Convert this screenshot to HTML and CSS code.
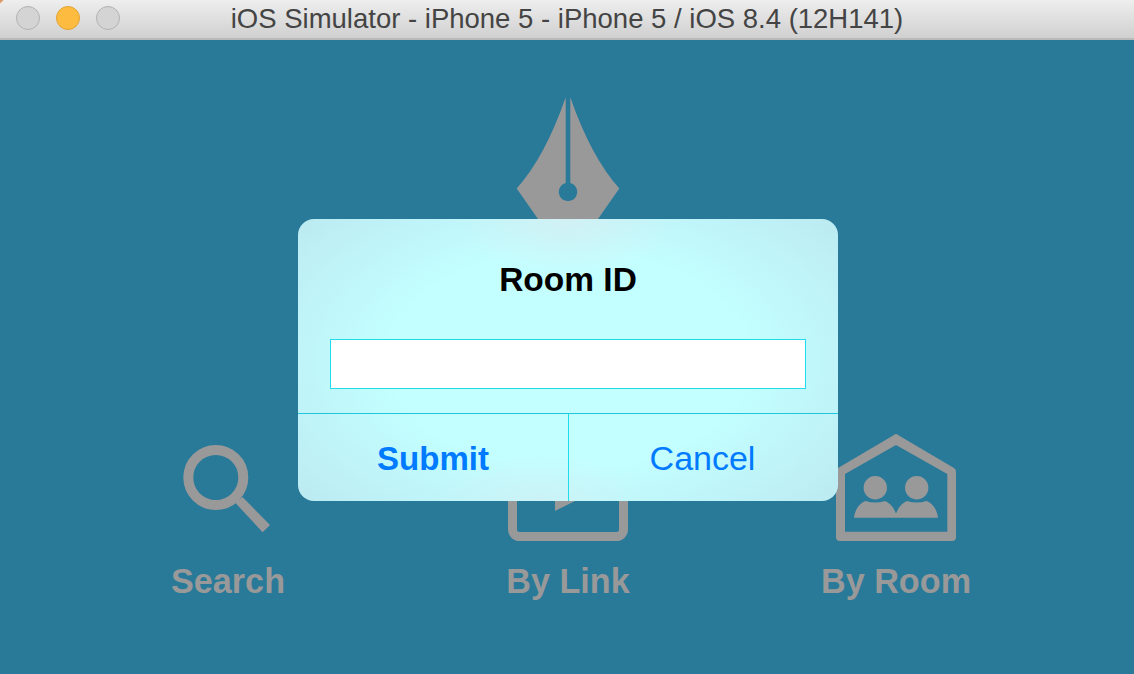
FILE: index.html
```html
<!DOCTYPE html>
<html lang="en">
<head>
    <meta charset="UTF-8">
    <title>iOS Simulator - iPhone 5 - iPhone 5 / iOS 8.4 (12H141)</title>
    <link rel="stylesheet" href="styles.css">
</head>
<body>
    <div class="titlebar">
        <div class="lights">
            <span class="light"></span>
            <span class="light yellow"></span>
            <span class="light"></span>
        </div>
        <div class="window-title">iOS Simulator - iPhone 5 - iPhone 5 / iOS 8.4 (12H141)</div>
    </div>

    <div class="screen">
        <!-- Pen nib logo -->
        <svg class="logo" width="106" height="140" viewBox="-2 0 106 140">
            <path fill="#999" fill-rule="evenodd" d="M49.7 0.3 Q29 60 0.7 91.5 L22 122 L28 132 L76 132 L82 122 L103.3 91.5 Q75 60 54.3 0.3 L54.3 86 A9.2 9.2 0 1 1 49.7 86 Z"/>
        </svg>

        <div class="menu">
            <div class="menu-item">
                <svg class="menu-icon" width="120" height="107" viewBox="0 0 120 107">
                    <circle cx="47.8" cy="43.5" r="27.5" fill="none" stroke="#999" stroke-width="10"/>
                    <path fill="#999" d="M67 68.5 L74.5 63 L102 91 L94.7 98.3 Z"/>
                </svg>
                <div class="menu-label">Search</div>
            </div>
            <div class="menu-item">
                <svg class="menu-icon" width="120" height="107" viewBox="0 0 120 107">
                    <rect x="4.5" y="10" width="111" height="92.5" rx="7" fill="none" stroke="#999" stroke-width="9"/>
                    <path fill="#999" d="M47 37 L87 57 L47 77 Z"/>
                </svg>
                <div class="menu-label">By Link</div>
            </div>
            <div class="menu-item">
                <svg class="menu-icon" width="120" height="107" viewBox="0 0 120 107">
                    <path fill="#999" fill-rule="evenodd" d="M60 0 Q61 0 62 1 L118 34 Q120 35 120 38 L120 103 Q120 107 116 107 L4 107 Q0 107 0 103 L0 38 Q0 35 2 34 L58 1 Q59 0 60 0 Z M60 11 L9 40 L9 97.7 L111.3 97.7 L111.3 40 Z"/>
                    <circle cx="39.3" cy="53.7" r="11.7" fill="#999"/>
                    <circle cx="80.7" cy="53.7" r="11.7" fill="#999"/>
                    <path fill="#999" d="M18 83.7 C19 75 24 69 29.5 67 Q39.3 70 49 67 C54 69 58 74 60 79.5 C62 74 66 69 71 67 Q80.7 70 90.5 67 C96 69 101 75 102 83.7 Z"/>
                </svg>
                <div class="menu-label">By Room</div>
            </div>
        </div>

        <!-- Room ID prompt -->
        <div class="dialog">
            <div class="dialog-title">Room ID</div>
            <div class="dialog-field">
                <input type="text" class="dialog-input">
            </div>
            <div class="dialog-buttons">
                <div class="dialog-button primary">Submit</div>
                <div class="dialog-button cancel">Cancel</div>
            </div>
        </div>
    </div>
</body>
</html>
```

FILE: styles.css
```css
html, body {
    margin: 0;
    height: 100%;
    overflow: hidden;
}
body {
    display: flex;
    flex-direction: column;
    font-family: "Liberation Sans", Arial, sans-serif;
    background-color: #297999;
}
.titlebar {
    display: flex;
    align-items: center;
    justify-content: center;
    position: relative;
    height: 38px;
    flex-shrink: 0;
    background:
        linear-gradient(135deg, #dc9a68 2px, rgba(220, 154, 104, 0) 3px),
        linear-gradient(#eeeeee, #d0d0d0);
    border-bottom: 2px solid #b9b9b9;
}
.lights {
    position: absolute;
    left: 16px;
    top: 6px;
    display: flex;
    gap: 16px;
}
.light {
    width: 22px;
    height: 22px;
    border: 1px solid #b2b2b2;
    border-radius: 50%;
    background-color: #d4d4d4;
}
.light.yellow {
    background-color: #fdbc40;
    border-color: #e3a232;
}
.window-title {
    font-size: 27.5px;
    color: #444;
    white-space: nowrap;
}
.screen {
    position: relative;
    flex: 1;
    display: flex;
    flex-direction: column;
    align-items: center;
    padding-top: 57px;
}
.logo {
    flex-shrink: 0;
}
.menu {
    align-self: flex-start;
    display: grid;
    grid-template-columns: 340px 328px 120px;
    margin-top: 197px;
    margin-left: 168px;
}
.menu-item {
    display: flex;
    flex-direction: column;
    align-items: center;
    width: 120px;
}
.menu-icon {
    display: block;
}
.menu-label {
    margin-top: 20px;
    font-size: 34.2px;
    line-height: 40px;
    font-weight: bold;
    color: #999;
    white-space: nowrap;
}
.dialog {
    position: absolute;
    left: 298px;
    top: 179px;
    width: 540px;
    height: 282px;
    display: flex;
    flex-direction: column;
    border-radius: 16px;
    overflow: hidden;
    background:
        radial-gradient(ellipse 110px 60px at 50% 0, rgba(214, 238, 243, 0.8), rgba(214, 238, 243, 0)),
        radial-gradient(ellipse 110px 50px at 45% 100%, rgba(208, 240, 245, 0.7), rgba(208, 240, 245, 0)),
        radial-gradient(ellipse 375px 225px at 50% 50%, #c3ffff 48%, #bbe8f0 100%);
}
.dialog-title {
    margin-top: 42px;
    height: 38px;
    line-height: 38px;
    font-size: 33.5px;
    font-weight: bold;
    text-align: center;
    color: #000;
}
.dialog-field {
    padding: 40px 32px 24px;
}
.dialog-input {
    display: block;
    box-sizing: border-box;
    width: 100%;
    height: 50px;
    margin: 0;
    padding: 0;
    border: 1px solid #1fdcea;
    border-radius: 0;
    background-color: #fff;
    outline: none;
}
.dialog-buttons {
    flex: 1;
    display: flex;
    border-top: 1px solid #22c6dc;
}
.dialog-button {
    box-sizing: border-box;
    display: flex;
    align-items: center;
    justify-content: center;
    padding-top: 2px;
    font-size: 34px;
    color: #007aff;
}
.dialog-button.primary {
    flex: 0 0 271px;
    font-size: 33px;
    font-weight: bold;
    border-right: 1px solid #1fdcea;
}
.dialog-button.cancel {
    flex: 1;
    padding-right: 2px;
}
```
